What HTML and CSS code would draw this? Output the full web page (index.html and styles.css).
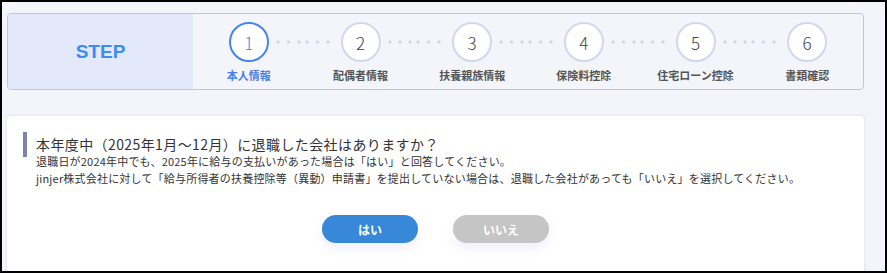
FILE: index.html
```html
<!DOCTYPE html>
<html lang="ja">
<head>
  <meta charset="UTF-8">
  <meta name="viewport" content="width=device-width, initial-scale=1.0">
  <title>退職した会社の確認</title>
  <link rel="stylesheet" href="styles.css">
</head>
<body>
  <div class="frame">
    <div class="step-bar">
      <div class="step-label">STEP</div>
      <ol class="steps">
        <li class="step active"><div class="step-row"><span class="line"></span><span class="num">1</span><span class="line"></span></div><span class="name">本人情報</span></li>
        <li class="step"><div class="step-row"><span class="line"></span><span class="num">2</span><span class="line"></span></div><span class="name">配偶者情報</span></li>
        <li class="step"><div class="step-row"><span class="line"></span><span class="num">3</span><span class="line"></span></div><span class="name">扶養親族情報</span></li>
        <li class="step"><div class="step-row"><span class="line"></span><span class="num">4</span><span class="line"></span></div><span class="name">保険料控除</span></li>
        <li class="step"><div class="step-row"><span class="line"></span><span class="num">5</span><span class="line"></span></div><span class="name">住宅ローン控除</span></li>
        <li class="step"><div class="step-row"><span class="line"></span><span class="num">6</span><span class="line"></span></div><span class="name">書類確認</span></li>
      </ol>
    </div>

    <section class="card">
      <h2 class="question">本年度中（2025年1月～12月）に退職した会社はありますか？</h2>
      <p class="note">退職日が2024年中でも、2025年に給与の支払いがあった場合は「はい」と回答してください。<br>jinjer株式会社に対して「給与所得者の扶養控除等（異動）申請書」を提出していない場合は、退職した会社があっても「いいえ」を選択してください。</p>
      <div class="answers">
        <button class="btn btn-yes" type="button">はい</button>
        <button class="btn btn-no" type="button">いいえ</button>
      </div>
    </section>
  </div>
</body>
</html>
```

FILE: styles.css
```css
body {
  margin: 0;
  font-family: "Noto Sans CJK JP", "Noto Sans", sans-serif;
  color: #333;
}

.frame {
  box-sizing: border-box;
  width: 887px;
  height: 273px;
  border: 2px solid #000;
  background: #f4f5fa;
  padding: 11px 21px 0 5px;
  overflow: hidden;
}

/* ステップ表示 */
.step-bar {
  display: flex;
  height: 77px;
  box-sizing: border-box;
  border: 1px solid #b8c7f2;
  border-radius: 4px;
  overflow: hidden;
}

.step-label {
  width: 185px;
  background: #e3e9fb;
  color: #3d8cf2;
  font-family: "Liberation Sans", Arial, sans-serif;
  font-weight: bold;
  font-size: 19px;
  display: flex;
  align-items: center;
  justify-content: center;
  padding-top: 1px;
}

.steps {
  flex: 1;
  display: grid;
  grid-template-columns: repeat(6, 1fr);
  margin: 0;
  padding: 8px 0 0;
  list-style: none;
}

.step {
  display: flex;
  flex-direction: column;
  align-items: center;
}

.step-row {
  display: flex;
  align-items: center;
  width: 100%;
}

.line {
  flex: 1;
  height: 4px;
  margin: 0 3px;
  background-image: radial-gradient(circle at 2px 2px, #cfd3ea 1.3px, transparent 1.8px);
  background-size: 8px 4px;
  background-repeat: space no-repeat;
}

.line:first-child {
  margin-left: 0;
}

.line:last-child {
  margin-right: 0;
}

.step-row .line:first-child {
  margin-right: 7px;
}

.step-row .line:last-child {
  margin-left: 7px;
}

.step:first-child .line:first-child,
.step:last-child .line:last-child {
  background: none;
}

.num {
  box-sizing: border-box;
  width: 40px;
  height: 40px;
  border: 2px solid #d2d7f0;
  border-radius: 50%;
  background: #fff;
  display: flex;
  align-items: center;
  justify-content: center;
  font-size: 17px;
  font-weight: 300;
  color: #444;
}

.name {
  margin-top: 6px;
  font-size: 11px;
  line-height: 14px;
  font-weight: bold;
  color: #555;
}

.active .num {
  border-color: #4584f2;
  color: #4a85f0;
}

.active .name {
  color: #4a7ee8;
}

/* 質問カード */
.card {
  margin-top: 26px;
  width: 857px;
  min-height: 200px;
  box-sizing: border-box;
  background: #fff;
  border-radius: 4px;
  box-shadow: 0 0 3px rgba(140, 140, 190, 0.3);
  padding: 16px 16px 0;
}

.question {
  margin: 0;
  border-left: 4px solid #7d82ae;
  padding: 2px 0 2px 9px;
  font-size: 14px;
  line-height: 21px;
  font-weight: normal;
  letter-spacing: 0.4px;
  color: #333;
}

.note {
  margin: -4px 0 0 13px;
  font-size: 11px;
  line-height: 17px;
  letter-spacing: 0.2px;
  color: #333;
}

.answers {
  display: flex;
  justify-content: center;
  gap: 35px;
  margin-top: 28px;
}

.btn {
  width: 96px;
  height: 28px;
  border: none;
  border-radius: 14px;
  color: #fff;
  font-family: inherit;
  font-size: 12px;
  font-weight: bold;
  box-shadow: 0 5px 12px rgba(130, 110, 230, 0.12);
}

.btn-yes {
  background: #3788d8;
}

.btn-no {
  background: #c5c5c5;
}
```
